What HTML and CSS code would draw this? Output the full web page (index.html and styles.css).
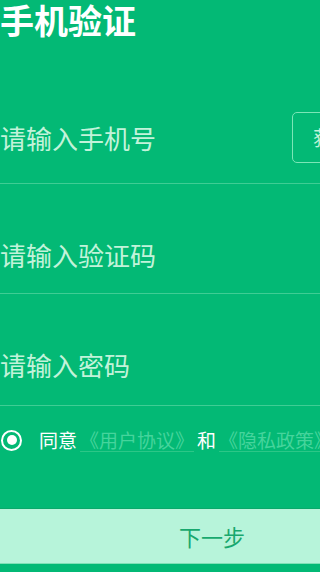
FILE: index.html
```html
<!DOCTYPE html>
<html lang="zh-CN">

<head>
    <meta charset="UTF-8">
    <meta name="viewport" content="width=device-width, initial-scale=1.0">
    <title>手机验证</title>
    <link rel="stylesheet" href="styles.css">
</head>

<body>
    <div class="page">
        <!-- 标题 -->
        <h1 class="title">手机验证</h1>

        <!-- 表单 -->
        <div class="form">
            <div class="field field-phone">
                <span class="placeholder">请输入手机号</span>
                <button class="get-code">获取验证码</button>
            </div>
            <div class="field">
                <span class="placeholder">请输入验证码</span>
            </div>
            <div class="field field-last">
                <span class="placeholder">请输入密码</span>
            </div>
        </div>

        <!-- 协议 -->
        <div class="agree">
            <span class="radio"></span>
            <span class="agree-text">同意</span>
            <a class="agree-link" href="#">《用户协议》</a>
            <span class="agree-text">和</span>
            <a class="agree-link" href="#">《隐私政策》</a>
        </div>

        <!-- 下一步 -->
        <div class="next">下一步</div>
    </div>
</body>

</html>
```

FILE: styles.css
```css
/* Reset styling */
* {
    margin: 0;
    padding: 0;
    box-sizing: border-box;
    font-family: "Noto Sans CJK SC", "Noto Sans", sans-serif;
}

html,
body {
    height: 100%;
    overflow: hidden;
}

body {
    background-color: #03b975;
}

.page {
    width: 424px;
    height: 572px;
    display: flex;
    flex-direction: column;
}

/* Title */
.title {
    height: 40px;
    font-size: 34px;
    line-height: 40px;
    font-weight: bold;
    color: #ffffff;
}

/* Form rows */
.field {
    display: flex;
    align-items: center;
    justify-content: space-between;
    padding: 56px 0 23px;
    border-bottom: 1px solid #3fcd94;
}

.field-phone {
    padding: 72px 0 20px;
}

.field-last {
    padding-bottom: 25px;
}

.placeholder {
    font-size: 26px;
    line-height: 30px;
    color: #c2f3da;
}

.get-code {
    height: 51px;
    padding: 0 20px;
    background: none;
    border: 1.5px solid #7be6b7;
    border-radius: 5px;
    font-size: 20px;
    color: #c2f3da;
    margin-right: -10px;
}

/* Agreement */
.agree {
    display: flex;
    align-items: center;
    padding-top: 19px;
    height: 49px;
    font-size: 19px;
    line-height: 30px;
}

.radio {
    position: relative;
    flex-shrink: 0;
    width: 21px;
    height: 21px;
    margin-left: 1px;
    margin-right: 17px;
    border: 2px solid #ffffff;
    border-radius: 50%;
}

.radio::after {
    content: "";
    position: absolute;
    top: 3.5px;
    left: 3.5px;
    width: 10px;
    height: 10px;
    border-radius: 50%;
    background-color: #ffffff;
}

.agree-text {
    color: #ffffff;
    white-space: nowrap;
}

.agree-link {
    margin: 0 3px;
    color: #45d49c;
    white-space: nowrap;
    text-decoration: underline;
    text-decoration-color: #2cc787;
    text-underline-offset: 3px;
}

/* Next button */
.next {
    margin-top: 53px;
    height: 56px;
    line-height: 54px;
    text-align: center;
    font-size: 22px;
    color: #18a86e;
    background-color: #b7f4da;
    border-top: 1px solid #0aa96b;
    border-bottom: 1px solid #7fe0b6;
}
```
